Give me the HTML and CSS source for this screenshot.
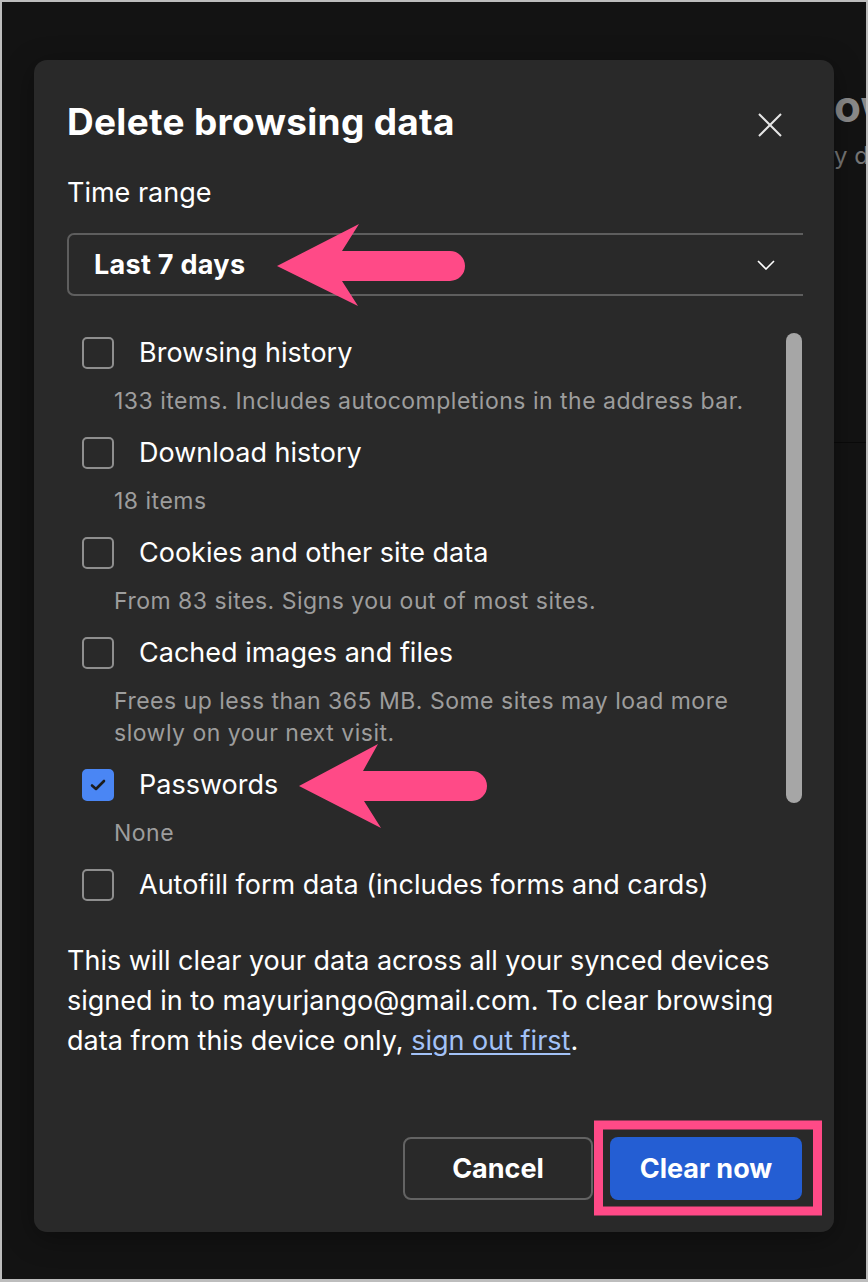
FILE: index.html
```html
<!DOCTYPE html>
<html lang="en">
<head>
<meta charset="utf-8">
<title>Delete browsing data</title>
<link rel="stylesheet" href="styles.css">
</head>
<body>
<div class="frame">
  <div class="bg-heading">ow</div>
  <div class="bg-sub">y d</div>
  <div class="bg-rule"></div>
</div>

<div class="dialog" role="dialog">
  <div class="header">
    <h1 class="title">Delete browsing data</h1>
    <svg class="close" width="24" height="24" viewBox="0 0 24 24"><path d="M1 1L23 23M23 1L1 23" stroke="#e6e6e6" stroke-width="2" fill="none"/></svg>
  </div>
  <div class="field-label">Time range</div>
  <div class="select-wrap">
    <div class="select">
      <span>Last 7 days</span>
      <svg width="18" height="10" viewBox="0 0 18 10"><path d="M1 1L9 9L17 1" stroke="#fff" stroke-width="1.6" fill="none"/></svg>
    </div>
  </div>

  <div class="list">
    <div class="items">
      <div class="item">
        <div class="row"><span class="box"></span><span class="label">Browsing history</span></div>
        <div class="sub">133 items. Includes autocompletions in the address bar.</div>
      </div>
      <div class="item">
        <div class="row"><span class="box"></span><span class="label">Download history</span></div>
        <div class="sub">18 items</div>
      </div>
      <div class="item">
        <div class="row"><span class="box"></span><span class="label">Cookies and other site data</span></div>
        <div class="sub">From 83 sites. Signs you out of most sites.</div>
      </div>
      <div class="item">
        <div class="row"><span class="box"></span><span class="label">Cached images and files</span></div>
        <div class="sub">Frees up less than 365 MB. Some sites may load more<br>slowly on your next visit.</div>
      </div>
      <div class="item">
        <div class="row"><span class="box checked"><svg width="18" height="14" viewBox="0 0 18 14"><path d="M3 7.5L7 11L15 3" stroke="#1c1c1c" stroke-width="2.6" fill="none" stroke-linecap="round" stroke-linejoin="round"/></svg></span><span class="label">Passwords</span></div>
        <div class="sub">None</div>
      </div>
      <div class="item last">
        <div class="row"><span class="box"></span><span class="label">Autofill form data (includes forms and cards)</span></div>
      </div>
    </div>
    <div class="scrollbar"></div>
  </div>

  <p class="note">This will clear your data across all your synced devices<br>signed in to mayurjango@gmail.com. To clear browsing<br>data from this device only, <a href="#" class="link">sign out first</a>.</p>

  <div class="actions">
    <button class="btn cancel">Cancel</button>
    <button class="btn primary">Clear now</button>
  </div>
</div>

<svg class="annotations" width="868" height="1282" viewBox="0 0 868 1282">
  <path d="M277 266L359 224L342 251L450 251A15 15 0 0 1 450 281L342 281L358 306Z" fill="#ff4a87"/>
  <path d="M299 786L378 744L363 771L472 771A15 15 0 0 1 472 801L364 801L381 828Z" fill="#ff4a87"/>
  <rect x="598.5" y="1125" width="219" height="86" fill="none" stroke="#ff4a87" stroke-width="9"/>
</svg>
</body>
</html>
```

FILE: styles.css
```css
* { box-sizing: border-box; margin: 0; padding: 0; }

body {
  position: relative;
  width: 868px;
  height: 1282px;
  overflow: hidden;
  font-family: Inter, "Noto Sans", sans-serif;
  color: #fff;
  background: #bdbdbd;
}

.frame {
  width: 868px;
  height: 1282px;
  border: 2px solid #bdbdbd;
  border-bottom-width: 3px;
  background: #131313;
  overflow: hidden;
  padding: 79px 0 0 832px;
}

.bg-heading {
  font-size: 44px;
  font-weight: 700;
  line-height: 50px;
  color: #8a8a8a;
  white-space: nowrap;
}

.bg-sub {
  margin-top: 10px;
  font-size: 24px;
  line-height: 30px;
  color: #767676;
  white-space: nowrap;
}

.bg-rule {
  margin-top: 271px;
  height: 1px;
  background: #0a0a0a;
}

.dialog {
  position: absolute;
  left: 34px;
  top: 60px;
  width: 800px;
  height: 1172px;
  background: #292929;
  border-radius: 13px;
  padding: 40px 32px 32px 33px;
  display: flex;
  flex-direction: column;
  box-shadow: 0 6px 28px rgba(0, 0, 0, 0.35);
}

.header {
  display: flex;
  justify-content: space-between;
  align-items: center;
  height: 44px;
}

.title {
  font-size: 37px;
  font-weight: 700;
  line-height: 44px;
  letter-spacing: 0.3px;
}

.close {
  margin-right: 20px;
  margin-top: 6px;
}

.field-label {
  margin-top: 33px;
  font-size: 27px;
  line-height: 32px;
}

.select-wrap {
  margin-top: 24px;
  margin-right: -1px;
  overflow: hidden;
}

.select {
  width: calc(100% + 8px);
  height: 63px;
  border: 2px solid #5e5e5e;
  border-radius: 7px;
  display: flex;
  align-items: center;
  justify-content: space-between;
  padding: 0 34px 0 25px;
  font-size: 27px;
  font-weight: 700;
  letter-spacing: 0.3px;
}

.list {
  margin-top: 37px;
  display: flex;
  align-items: flex-start;
}

.items {
  flex: 1;
  padding-left: 15px;
}

.item { margin-bottom: 16px; }
.item.last { margin-bottom: 0; }

.row {
  display: flex;
  align-items: center;
  gap: 25px;
  height: 40px;
}

.box {
  width: 32px;
  height: 32px;
  flex: none;
  border: 2px solid #8e8e8e;
  border-radius: 5px;
  display: flex;
  align-items: center;
  justify-content: center;
}

.box.checked {
  background: #4a86f4;
  border-color: #4a86f4;
}

.label {
  font-size: 27px;
  line-height: 40px;
}

.sub {
  margin-top: 12px;
  padding-left: 32px;
  font-size: 23px;
  line-height: 32px;
  letter-spacing: 0.5px;
  color: #9d9d9d;
}

.scrollbar {
  width: 16px;
  height: 470px;
  flex: none;
  border-radius: 8px;
  background: #a6a6a6;
}

.note {
  margin-top: 36px;
  font-size: 27px;
  line-height: 40px;
}

.link {
  color: #a3c2f7;
  text-decoration: underline;
  text-underline-offset: 3px;
}

.actions {
  margin-top: auto;
  display: flex;
  justify-content: flex-end;
  gap: 17px;
}

.btn {
  height: 63px;
  border-radius: 8px;
  font-family: Inter, "Noto Sans", sans-serif;
  font-size: 27px;
  font-weight: 700;
  color: #fff;
}

.cancel {
  width: 190px;
  background: transparent;
  border: 2px solid #636363;
}

.primary {
  width: 192px;
  background: #245ed3;
  border: none;
}

.annotations {
  position: absolute;
  left: 0;
  top: 0;
  pointer-events: none;
}
```
